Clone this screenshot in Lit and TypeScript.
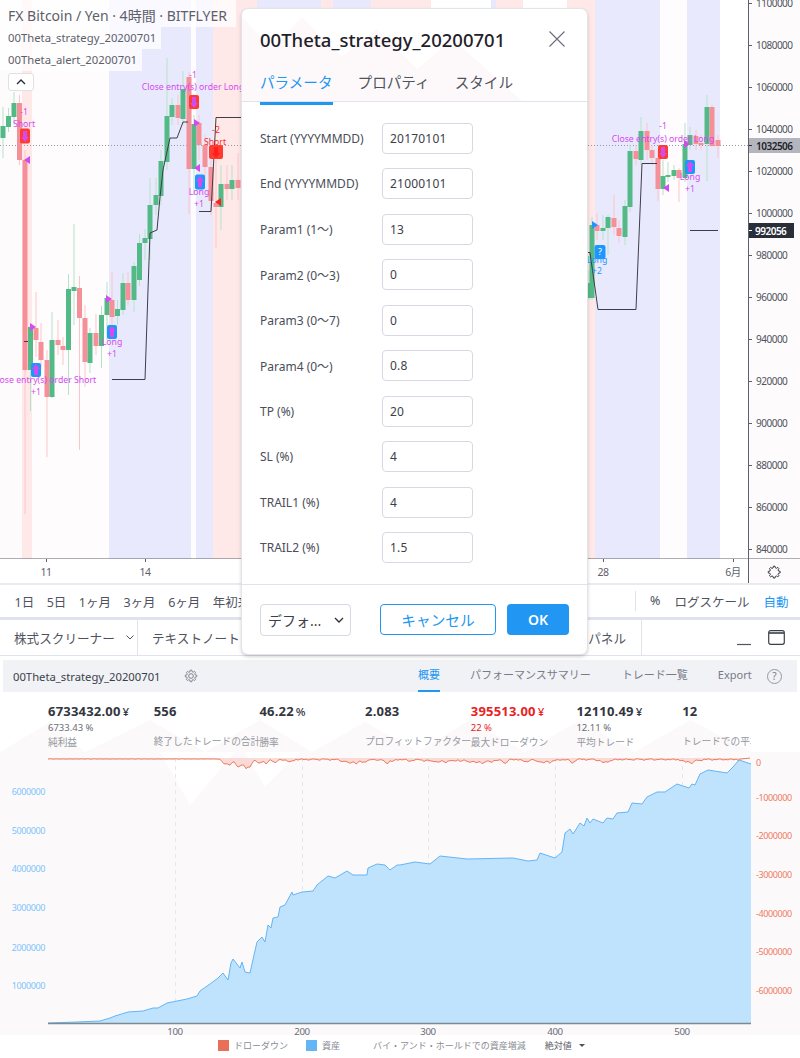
import { LitElement, html, css, svg } from "lit";
import { customElement } from "lit/decorators.js";

const G = "#53b987", R = "#f58f98";
// [x, bodyTop, bodyBottom, wickTop, wickBottom, up]
type C = [number, number, number, number, number, number];
const candles: C[] = [
  [3,126,138,107,158,1],[8.5,116,127,108,132,1],[14,103,117,92,125,1],[19.5,103,160,95,165,0],[25,160,370,150,514,0],
  [30.5,327,370,324,411,1],[36,328,340,292,357,0],[41,342,360,323,370,0],[47,360,397,350,457,0],[52,340,397,312,398,1],
  [58,340,345,320,355,0],[63,346,350,337,365,0],[68.5,289,350,274,395,1],[74,287,291,224,325,1],[79.5,288,318,276,450,0],
  [85,318,362,305,387,0],[90,333,363,328,373,1],[96,333,346,314,355,0],[101.5,315,346,306,368,1],[107,298,315,282,340,1],
  [112,300,317,272,330,0],[117.5,309,316,300,325,1],[123,283,310,273,315,1],[128,283,300,272,305,0],[134,266,300,262,312,1],
  [139.5,243,280,234,286,1],[145,238,243,229,260,1],[150,205,239,178,260,1],[156,195,205,178,215,1],[161,161,196,150,205,1],
  [167,116,162,58,170,1],[172,105,117,98,125,1],[178,105,118,95,125,0],[183,89,119,71,125,1],[189,77,169,72,214,0],
  [194,124,169,115,195,1],[199,123,145,115,160,0],[205,145,167,135,180,0],[211,167,201,160,215,0],[216,203,207,160,248,0],
  [221,184,207,165,230,1],[227,184,189,165,200,0],[232,180,189,165,200,1],[238,180,188,153,200,0],
  [589,283,298,270,300,1],[592,225,298,217,300,1],[597,225,231,213,240,0],[603,228,231,215,240,1],[608,217,228,215,255,1],[614,218,227,195,235,0],
  [619,228,236,220,243,0],[625,206,237,200,245,1],[630,151,207,145,212,1],[636,151,159,145,165,0],[641,131,160,117,165,1],
  [647,131,150,123,160,0],[652,150,158,145,165,0],[658,158,189,150,201,0],[663,176,189,160,195,1],[668,175,177,162,182,1],
  [674,170,176,165,180,1],[679,170,178,168,202,0],[685,144,178,123,182,1],[690,135,145,127,150,1],[696,136,144,130,150,0],
  [701,143,145,135,150,0],[707,107,144,95,181,1],[712,107,146,105,147,0],[718,140,146,135,158,0],
];
const bands: [number, number, string][] = [
  [0,22,"#fefbfc"],[22,32,"#ffe8e8"],[32,109,"#fefcfc"],[109,191,"#e9e9fd"],[191,196,"#fefcfc"],[196,213,"#e9e9fd"],[213,257,"#ffe8e8"],
  [257,321,"#e9e9fd"],[321,333,"#ffe8e8"],[333,371,"#e9e9fd"],[371,431,"#ffe8e8"],[431,491,"#ffffff"],[491,496,"#e9e9fd"],
  [496,523,"#ffe8e8"],[523,567,"#ffffff"],[567,595,"#ffe8e8"],[595,660,"#e9e9fd"],[660,687,"#fefcfc"],[687,720,"#e9e9fd"],[720,748,"#ffffff"],
];
const prices: [string, number][] = [["1100000",3],["1080000",45],["1060000",87],["1040000",129],["1020000",171],["1000000",213],["980000",255],["960000",297],["940000",339],["920000",381],["900000",423],["880000",465],["860000",507],["840000",549]];
const lines = [
  "M199 211.5H211L216 117.5H241","M112 379.5H145L148 290L150 233L157 230L160 197L163 170L170 138H177L183 122H188","M24 341.5H28",
  "M587 252.5H590L598 309.5H636L642 163.5H657","M690 230.5H718",
];
const P = "#d24bf0";
const boxes: [number, number, number, number, string, number][] = [
  [25,136,10,15,"#ff3b30",0],[194,102,10,14,"#ff3b30",0],[216,152,14,14,"#ff3b30",0],[663,152,10,14,"#ff3b30",0],
  [36,370,10,14,"#1e96fc",1],[112,332,10,14,"#1e96fc",1],[200,182,10,15,"#1e96fc",1],[600,252,11,14,"#1e96fc",2],[690,167,10,14,"#1e96fc",1],
];
const tris: [number, number, number, string][] = [
  [27,160,-1,P],[33,327,1,P],[197,123,1,P],[197,168,-1,P],[218,202,-1,"#ff1f1f"],[109,299,1,P],[595,225,1,"#1e96fc"],[666,188,-1,P],[687,144,1,P],
];
const labels: [string, number, number, string][] = [
  ["-1",24,112,P],["Short",24,124,P],["Close entry(s) order Long",193,87,P],["-1",193,75,P],["Long",199,192,P],["+1",199,204,P],
  ["-2",216,130,"#ff2a2a"],["Short",215,142,"#ff2a2a"],["Close entry(s) order Short",44,380,P],["+1",36,392,P],["Long",112,342,P],["+1",112,354,P],
  ["Long",597,260,"#1e96fc"],["+2",597,271,"#1e96fc"],["Close entry(s) order Long",663,139,P],["-1",663,126,P],["Long",690,177,P],["+1",690,189,P],
];
const equity = "48,1023 77,1022 100,1021 110,1018 115,1016 128,1012 143,1011 153,1008 158,1008 167,1003 187,999 197,996 200,991 210,984 218,978 223,973 228,980 231,963 233,959 240,968 242,962 245,972 250,973 254,955 257,942 262,937 265,942 268,925 271,928 273,918 278,917 280,907 285,905 292,892 293,895 302,892 313,891 317,885 328,876 335,878 347,871 353,875 367,875 368,868 377,864 385,865 390,870 397,865 400,865 415,862 430,864 440,856 467,859 513,858 528,861 537,860 540,853 555,858 562,852 565,833 570,829 573,834 580,823 584,826 587,818 590,823 593,819 603,823 607,818 613,819 617,813 628,812 632,803 642,804 647,797 657,792 665,792 677,784 689,788 692,784 695,785 700,774 708,770 727,773 733,767 739,760 751,764";
const dips: [number, number, number][] = [[226,4,7],[232,3,5],[240,4,11],[248,3,15],[258,5,4],[266,3,5],[276,3,4],[290,4,3],[350,9,4],[362,7,3],[388,6,4],[410,3,2],[440,16,3],[480,16,4],[505,3,4],[525,3,4],[545,10,4],[572,3,4],[605,6,4],[690,8,4]];
function drawdown(): string {
  const pts: string[] = [];
  for (let x = 48; x <= 751; x += 2) {
    let d = 0.8 + (x > 220 ? 0.8 * Math.abs(Math.sin(x * 0.7) + Math.sin(x * 1.9)) : 0.3 * Math.abs(Math.sin(x * 0.5)));
    for (const [c, w, h] of dips) d += h * Math.exp(-((x - c) * (x - c)) / (w * w)) * (0.75 + 0.25 * Math.sin(x * 2.3));
    if (x > 738) d = Math.max(0, (751 - x) * 0.1);
    pts.push(`${x},${(758 + d).toFixed(1)}`);
  }
  return pts.join(" ");
}
const ddPts = drawdown();

const gearPath = "M8 1.5h2l.4 2 1.4.6 1.7-1.1 1.4 1.4-1.1 1.7.6 1.4 2 .4v2l-2 .4-.6 1.4 1.1 1.7-1.4 1.4-1.7-1.1-1.4.6-.4 2H8l-.4-2-1.4-.6-1.7 1.1-1.4-1.4 1.1-1.7-.6-1.4-2-.4V8l2-.4.6-1.4-1.1-1.7 1.4-1.4 1.7 1.1 1.4-.6z";

const rows: [string, string][] = [
  ["Start (YYYYMMDD)","20170101"],["End (YYYYMMDD)","21000101"],["Param1 (1～)","13"],["Param2 (0～3)","0"],["Param3 (0～7)","0"],
  ["Param4 (0～)","0.8"],["TP (%)","20"],["SL (%)","4"],["TRAIL1 (%)","4"],["TRAIL2 (%)","1.5"],
];
const stats: [string, string, string, string, string?][] = [
  ["6733432.00","¥","6733.43 %","純利益"],["556","","","終了したトレードの合計"],["46.22","%","","勝率"],["2.083","","","プロフィットファクター"],
  ["395513.00","¥","22 %","最大ドローダウン","neg"],["12110.49","¥","12.11 %","平均トレード"],["12","","","トレードでの平均バー数"],
];

@customElement("app-root")
export class AppRoot extends LitElement {
  static styles = css`
    :host { display: block; width: 800px; height: 1058px; position: relative; overflow: hidden; background: #fff;
      font-family: "Noto Sans", "Noto Sans CJK JP", sans-serif; color: #4a4e59; }
    svg { display: block; }
    svg text { font-family: "Noto Sans", "Noto Sans CJK JP", sans-serif; }
    .tight { letter-spacing: -.5px; }
    .tight2 { letter-spacing: -.4px; }
    .chart { height: 559px; position: relative; }
    .legend { position: absolute; left: 0; top: 0; display: flex; flex-direction: column; align-items: flex-start; }
    .lg { background: rgba(255,255,255,.72); padding: 0 5px 0 8px; height: 22px; line-height: 22px; font-size: 11.3px; color: #5d606b; white-space: nowrap; }
    .lg.main { height: 27px; line-height: 32px; font-size: 14px; padding-right: 9px; }
    .collapse { margin: 2px 0 0 8px; width: 26px; height: 18px; box-sizing: border-box; background: #fff; border: 1px solid #dfe1e8; border-radius: 3px; display: flex; align-items: center; justify-content: center; }
    .timeaxis { height: 24px; }
    .toolbar { height: 37px; box-sizing: border-box; border-top: 2px solid #e9ebf1; border-bottom: 3px solid #e0e3eb; display: flex; align-items: center; font-size: 12.5px; color: #50535e; white-space: nowrap; padding-left: 14.5px; }
    .toolbar .l { display: flex; gap: 12.5px; width: 620.5px; }
    .toolbar .sep { width: 1px; height: 20px; background: #e0e3eb; }
    .toolbar .r { display: flex; margin-left: 14px; gap: 14px; }
    .toolbar .on { color: #2196f3; }
    .panelbar { height: 36px; box-sizing: border-box; border-bottom: 1px solid #e0e3eb; display: flex; align-items: center; font-size: 12.6px; color: #50535e; white-space: nowrap; position: relative; }
    .ptab { height: 100%; display: flex; align-items: center; box-sizing: border-box; border-right: 1px solid #e0e3eb; padding-left: 14px; gap: 11px; width: 138px; }
    .ptab.w2 { width: 504px; }
    .ptab.w2 span:last-child { margin-left: auto; padding-right: 15px; }
    .winbtns { margin-left: auto; display: flex; align-items: center; gap: 17px; padding-right: 15px; }
    .winbtns .min { margin-top: 13px; }
    .sthead { margin: 4px 3px 0; height: 32px; background: #f0f2f6; display: flex; align-items: center; font-size: 11.25px; color: #3c3f4a; padding-left: 10px; white-space: nowrap; position: relative; }
    .sthead .gear { margin-left: 23px; }
    .sttabs { position: absolute; left: 415px; top: 0; height: 32px; display: flex; align-items: center; color: #787b86; font-size: 11px; }
    .sttabs span { height: 32px; line-height: 30px; box-sizing: border-box; }
    .sttabs .on { color: #2196f3; border-bottom: 2px solid #2196f3; margin-right: 30px; }
    .sttabs .t2 { margin-right: 31px; }
    .sttabs .t3 { margin-right: 30px; }
    .sttabs .t4 { margin-right: 15px; }
    .stats { width: 751px; height: 60px; overflow: hidden; box-sizing: border-box; padding: 11px 0 0 48px; display: flex; white-space: nowrap; position: relative; isolation: isolate; }
    .stwm { position: absolute; left: 0; top: 0; z-index: -1; }
    .st { width: 105.7px; flex: none; position: relative; }
    .st .v { font-size: 13px; font-weight: 700; line-height: 16px; color: #33363f; letter-spacing: .2px; }
    .st .v small { font-size: 11.5px; font-weight: 500; letter-spacing: 0; margin-left: 2px; }
    .st .s { font-size: 9.5px; line-height: 14px; height: 15px; margin-top: 1px; color: #6a6d78; }
    .st .k { font-size: 9.7px; line-height: 13px; color: #9598a1; }
    .st.neg .v, .st.neg .s { color: #e8231f; }
    .perf { height: 283px; position: relative; }
    .keys { display: flex; align-items: center; height: 20px; padding-left: 218px; font-size: 9px; color: #8a8d96; white-space: nowrap; }
    .keys i { width: 11px; height: 11px; margin-right: 5px; }
    .keys .a { margin-right: 18px; }
    .keys .b { margin-right: 33px; }
    .keys .c { margin-right: 19px; }
    .keys .d { color: #5d606b; margin-right: 7px; }
    .caret { width: 0; height: 0; border: 3px solid transparent; border-top: 3px solid #50535e; border-bottom: 0; }
    .dialog { position: absolute; left: 242px; top: 9px; width: 345px; height: 645px; box-sizing: border-box; background: #fff; border-radius: 6px; box-shadow: 0 0 0 1px #e3e4e8, 0 2px 4px rgba(0,0,0,.25); display: flex; flex-direction: column; overflow: hidden; }
    .wm { position: absolute; left: 0; top: 0; }
    .dhead { position: relative; height: 58px; display: flex; align-items: center; padding: 2px 22px 0 18px; box-sizing: border-box; font-size: 18.5px; font-weight: 500; color: #1f2129; white-space: nowrap; justify-content: space-between; }
    .dtabs { position: relative; height: 35px; box-sizing: border-box; border-bottom: 1px solid #e0e3eb; display: flex; padding-left: 18px; gap: 25px; font-size: 14.6px; color: #50535e; line-height: 30px; }
    .dtabs .on { color: #2196f3; position: relative; }
    .dtabs .on::after { content: ""; position: absolute; left: 0; right: 0; top: 35px; height: 3px; background: #2196f3; }
    .form { position: relative; padding: 21px 0 0 18px; display: grid; grid-template-columns: 122px 91px; row-gap: 14.45px; align-items: center; flex: 1; align-content: start; font-size: 12px; color: #4a4e59; white-space: nowrap; }
    .inp { height: 31px; box-sizing: border-box; border: 1px solid #d7d9e2; border-radius: 4px; padding: 0 7px; display: flex; align-items: center; font-size: 12px; color: #3c3f4a; letter-spacing: .2px; }
    .dfoot { height: 70px; box-sizing: border-box; border-top: 1px solid #e0e3eb; display: flex; align-items: center; padding: 0 18px; }
    .sel { width: 91px; height: 32px; box-sizing: border-box; border: 1px solid #d7d9e2; border-radius: 4px; display: flex; align-items: center; padding-left: 7px; justify-content: space-between; padding-right: 6px; font-size: 14px; color: #3c3f4a; }
    .btn { height: 31px; box-sizing: border-box; border-radius: 4px; display: flex; align-items: center; justify-content: center; font-size: 14.7px; }
    .cancel { width: 116px; margin-left: 29px; border: 1px solid #2196f3; color: #2196f3; }
    .ok { width: 62px; margin-left: 11px; background: #2196f3; color: #fff; font-weight: 600; font-size: 14px; }
  `;

  private mainChart() {
    return html`<svg width="800" height="559" viewBox="0 0 800 559">
      <rect x="748" width="52" height="559" fill="#fdfbfc"/>
      ${bands.map(([a, b, c]) => svg`<rect x=${a} width=${b - a} height="559" fill=${c}/>`)}
      <line x1="0" x2="748" y1="145.5" y2="145.5" stroke="#9598a1" stroke-dasharray="1 2"/>
      ${candles.map(([x, t, b, wt, wb, up]) => svg`
        <line x1=${x} x2=${x} y1=${wt} y2=${wb} stroke=${up ? "#b5e3c9" : "#fbc5c9"} stroke-width="1"/>
        <rect x=${x - 2.5} y=${t} width="5" height=${Math.max(b - t, 1)} fill=${up ? G : R}/>`)}
      ${lines.map((d) => svg`<path d=${d} fill="none" stroke="#3c3f4a" stroke-width="1"/>`)}
      ${boxes.map(([x, y, w, h, c, k]) => svg`
        <rect x=${x - w / 2} y=${y - h / 2} width=${w} height=${h} rx="2" fill=${c}/>
        ${k === 2 ? svg`<text x=${x} y=${y + 3} text-anchor="middle" font-size="9" fill="#fff">?</text>`
          : k === 1 ? svg`<path d="M${x} ${y - 6}l4 5h-2v6h-4v-6h-2z" fill=${P}/>`
          : svg`<path d="M${x} ${y + 6}l-4-5h2v-6h4v6h2z" fill=${w === 14 ? "#ff1f1f" : P}/>`}`)}
      ${tris.map(([x, y, dir, c]) => svg`<path d="M${x - dir * 3} ${y - 4}L${x + dir * 3} ${y}L${x - dir * 3} ${y + 4}z" fill=${c}/>`)}
      ${labels.map(([t, x, y, c]) => svg`<text x=${x} y=${y + 3} text-anchor="middle" font-size="8.7" fill=${c}>${t}</text>`)}
      <line x1="748.5" x2="748.5" y1="0" y2="559" stroke="#5d606b"/>
      <line x1="0" x2="800" y1="559" y2="559" stroke="#5d606b"/>
      ${prices.map(([t, y]) => svg`<line x1="749" x2="752" y1=${y + 0.5} y2=${y + 0.5} stroke="#5d606b"/><text class="tight" x="756" y=${y + 4} font-size="10" fill="#50535e">${t}</text>`)}
      <rect x="749" y="138" width="51" height="15" fill="#b4b6be"/>
      <line x1="749" x2="752" y1="145.5" y2="145.5" stroke="#2a2e39"/>
      <text class="tight" x="756" y="149.5" font-size="10" font-weight="600" fill="#1f2129">1032506</text>
      <rect x="749" y="223" width="45" height="15" fill="#2a2e39"/>
      <line x1="749" x2="752" y1="230.5" y2="230.5" stroke="#fff"/>
      <text class="tight" x="755" y="234.5" font-size="10" font-weight="600" fill="#fff">992056</text>
    </svg>`;
  }

  private perfChart() {
    const grid = [175, 302, 428, 555, 682];
    return html`<svg width="800" height="283" viewBox="0 752 800 283">
      <path d="M0 1035V752H160L190 805L235 752H245L265 787L300 752H800V1035Z" fill="#fcf9fa"/>
      ${grid.map((x) => svg`<line x1=${x + 0.5} x2=${x + 0.5} y1="758" y2="1023" stroke="#e3e7ee" stroke-dasharray="4 4"/>`)}
      <polygon points="48,1023 ${equity} 751,1023" fill="#bfe3fd"/>
      <polyline points=${equity} fill="none" stroke="#64b5f6" stroke-width="1"/>
      <polygon points="48,758 ${ddPts} 751,758" fill="#f7cfc9" fill-opacity=".75"/>
      <polyline points=${ddPts} fill="none" stroke="#ee7b63" stroke-width="1"/>
      <line x1="48" x2="751" y1="1023.5" y2="1023.5" stroke="#7d8a8f" stroke-width="1.4"/>
      ${grid.map((x, i) => svg`<text class="tight2" x=${x} y="1035" text-anchor="middle" font-size="9.7" fill="#6a6d78">${(i + 1) * 100}</text>`)}
      ${[["6000000",791],["5000000",830],["4000000",868],["3000000",907],["2000000",947],["1000000",985]].map(([t, y]) => svg`<text class="tight2" x="45" y=${(y as number) + 3.5} text-anchor="end" font-size="9" fill="#7cc4fb">${t}</text>`)}
      ${[["0",762],["-1000000",797],["-2000000",835],["-3000000",874],["-4000000",913],["-5000000",951],["-6000000",990]].map(([t, y]) => svg`<text class="tight2" x="756" y=${(y as number) + 3.5} font-size="9" fill="#ee7b63">${t}</text>`)}
    </svg>`;
  }

  render() {
    return html`
      <div class="chart">
        ${this.mainChart()}
        <div class="legend">
          <div class="lg main">FX Bitcoin / Yen · 4時間 · BITFLYER</div>
          <div class="lg">00Theta_strategy_20200701</div>
          <div class="lg">00Theta_alert_20200701</div>
          <div class="collapse"><svg width="10" height="6" viewBox="0 0 10 6"><path d="M1 5l4-4 4 4" fill="none" stroke="#2a2e39" stroke-width="1.4"/></svg></div>
        </div>
      </div>
      <div class="timeaxis">
        <svg width="800" height="24" viewBox="0 559 800 24">
          <rect x="748" y="559" width="52" height="24" fill="#fdfbfc"/>
          <line x1="748.5" x2="748.5" y1="559" y2="583" stroke="#5d606b"/>
          ${[["11",46],["14",145],["28",603],["6月",733]].map(([t, x]) => svg`
            <line x1=${(x as number) + 0.5} x2=${(x as number) + 0.5} y1="559" y2="562" stroke="#5d606b"/>
            <text class="tight" x=${x} y="576" text-anchor="middle" font-size="10.5" fill="#5d606b">${t}</text>`)}
          <g transform="translate(767 565) scale(.8)" fill="none" stroke="#2a2e39" stroke-width="1.2"><path d=${gearPath}/></g>
        </svg>
      </div>
      <div class="toolbar">
        <div class="l"><span>1日</span><span>5日</span><span>1ヶ月</span><span>3ヶ月</span><span>6ヶ月</span><span>年初来</span></div>
        <div class="sep"></div>
        <div class="r"><span>%</span><span>ログスケール</span><span class="on">自動</span></div>
      </div>
      <div class="panelbar">
        <div class="ptab"><span>株式スクリーナー</span><svg width="8" height="5" viewBox="0 0 8 5"><path d="M.5.5L4 4 7.5.5" fill="none" stroke="#50535e"/></svg></div>
        <div class="ptab w2"><span>テキストノート</span><span>パネル</span></div>
        <div class="winbtns">
          <svg class="min" width="14" height="3" viewBox="0 0 14 3"><path d="M0 1.5h14" stroke="#50535e" stroke-width="1.2"/></svg>
          <svg width="17" height="15" viewBox="0 0 17 15"><rect x=".7" y=".7" width="15.6" height="13.6" rx="2" fill="none" stroke="#3c3f4a" stroke-width="1.2"/><path d="M1 3h15" stroke="#3c3f4a" stroke-width="1.6"/></svg>
        </div>
      </div>
      <div class="sthead">
        <span>00Theta_strategy_20200701</span>
        <svg class="gear" width="14" height="14" viewBox="0 0 18 18" fill="none" stroke="#787b86" stroke-width="1.2"><path d=${gearPath}/><circle cx="9" cy="9" r="3"/></svg>
        <div class="sttabs">
          <span class="on">概要</span><span class="t2">パフォーマンスサマリー</span><span class="t3">トレード一覧</span><span class="t4">Export</span>
          <svg width="15" height="15" viewBox="0 0 15 15"><circle cx="7.5" cy="7.5" r="7" fill="none" stroke="#9598a1"/><text x="7.5" y="11" text-anchor="middle" font-size="10" fill="#787b86">?</text></svg>
        </div>
      </div>
      <div class="stats">
        <svg class="stwm" width="751" height="60" viewBox="0 0 751 60"><path d="M0 60L50 30L85 60L150 28L205 60L260 28L312 60L365 30L418 60L470 28L525 60L580 28L635 60L690 28L751 60Z" fill="#fcf9fa"/></svg>
        ${stats.map(([v, u, s, k, n]) => html`<div class="st ${n ?? ""}">
          <div class="v">${v}${u ? html`<small>${u}</small>` : ""}</div>
          <div class="s">${s}</div>
          <div class="k">${k}</div>
        </div>`)}
      </div>
      <div class="perf">${this.perfChart()}</div>
      <div class="keys">
        <i style="background:#e97058"></i><span class="a">ドローダウン</span>
        <i style="background:#64b5f6"></i><span class="b">資産</span>
        <span class="c">バイ・アンド・ホールドでの資産増減</span>
        <span class="d">絶対値</span><span class="caret"></span>
      </div>
      <div class="dialog">
        <svg class="wm" width="345" height="110" viewBox="0 0 345 110"><path d="M0 8L30 40L60 8L100 48L135 20L175 60L210 30L280 92H0Z" fill="#fdf9fa"/></svg>
        <div class="dhead"><span>00Theta_strategy_20200701</span>
          <svg width="16" height="16" viewBox="0 0 16 16"><path d="M.5.5l15 15M15.5.5l-15 15" stroke="#6a6d78" stroke-width="1.1"/></svg>
        </div>
        <div class="dtabs"><span class="on">パラメータ</span><span>プロパティ</span><span>スタイル</span></div>
        <div class="form">
          ${rows.map(([k, v]) => html`<span>${k}</span><div class="inp">${v}</div>`)}
        </div>
        <div class="dfoot">
          <div class="sel"><span>デフォ...</span><svg width="10" height="6" viewBox="0 0 10 6"><path d="M1 1l4 4 4-4" fill="none" stroke="#2a2e39" stroke-width="1.3"/></svg></div>
          <div class="btn cancel">キャンセル</div>
          <div class="btn ok">OK</div>
        </div>
      </div>
    `;
  }
}
